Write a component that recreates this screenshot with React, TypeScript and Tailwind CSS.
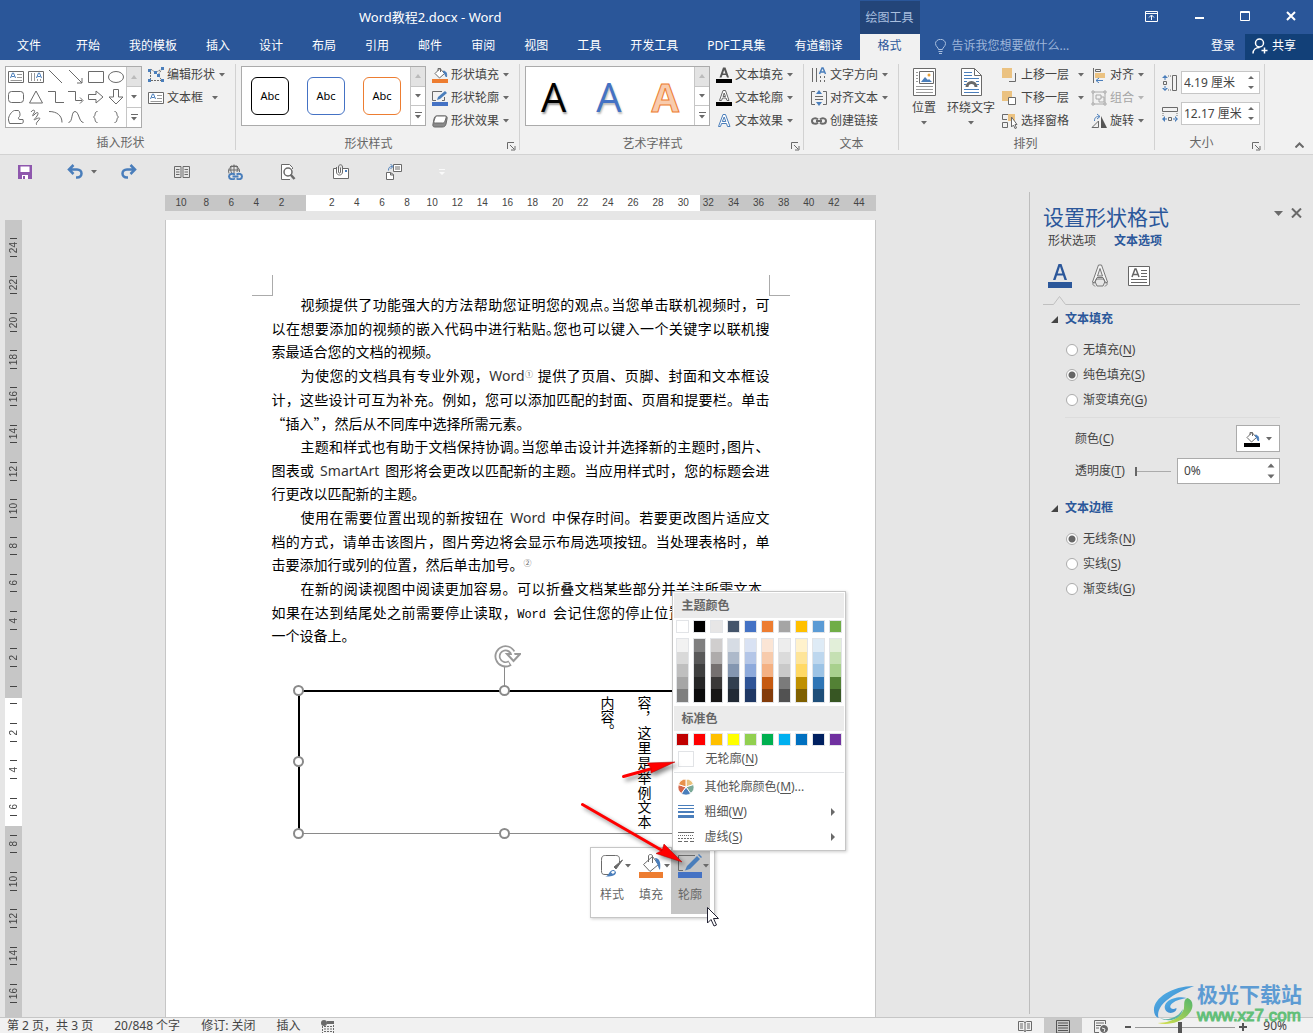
import { ReactNode, useState } from 'react';

const gray = '#6a6a6a';
const blue = '#4a7ebb';

function Ico({ w = 16, h = 16, children }: { w?: number; h?: number; children: ReactNode }) {
    return (
        <svg width={w} height={h} viewBox={`0 0 ${w} ${h}`} fill="none" stroke={gray} strokeWidth="1" className="shrink-0">
            {children}
        </svg>
    );
}

function Caret({ light = false }: { light?: boolean }) {
    return (
        <svg width="6" height="4" viewBox="0 0 6 4" className="shrink-0">
            <path d="M0 0h6L3 3.5z" fill={light ? '#b5b5b5' : '#6a6a6a'} />
        </svg>
    );
}

const Bucket = ({ color }: { color: string }) => (
    <Ico>
        <path d="M3 6.500l5-5 4.500 5-5 4.500zM6 4V1.500h2.500V5" fill="#fff" />
        <path d="M11.500 4c3 .5 3.500 3 3 6-1.500-1-1-3-2.500-4z" fill={blue} stroke={blue} />
        <path d="M0 12h16v4H0z" fill={color} stroke="none" />
    </Ico>
);

const Pen = ({ color }: { color: string }) => (
    <Ico>
        <path d="M10 1.500H.5v9H4M12.500 7v3.500H10" />
        <path d="M5 10l1-3 7-6 2 2-7 6z" fill={blue} stroke="none" />
        <path d="M0 12h16v4H0z" fill={color} stroke="none" />
    </Ico>
);

const LetterA = ({ fill, stroke, bar }: { fill: string; stroke: string; bar?: boolean }) => (
    <Ico>
        <path
            d={bar ? 'M3.500 10.500L7 .5h2.500l3.500 10h-2l-1-2.500H6.500l-1 2.500zM7 6.500h2.500L8.200 3z' : 'M2.500 13.500L7 1.500h2.500l4.500 12h-2.500l-1-3h-5l-1 3zM6.300 8.500h3.500L8.200 4z'}
            fill={fill}
            stroke={stroke}
            fillRule="evenodd"
        />
        {bar && <path d="M0 12h16v4H0z" fill="#000" stroke="none" />}
    </Ico>
);

const TextBoxIcon = () => (
    <Ico>
        <path d="M.5 2.500h15v11H.5z" fill="#fff" />
        <path d="M2.500 9l2-5h1l2 5M3.500 7.500h3" stroke={blue} />
        <path d="M9 5.500h5M9 8.500h5M2.500 11.500H14" stroke="#999" />
    </Ico>
);

const VerticalBoxIcon = () => (
    <Ico>
        <path d="M.5 2.500h15v11H.5z" fill="#fff" />
        <path d="M3.500 4v8M6.500 4v8M9.500 10v2M12.500 10v2" stroke="#999" />
        <path d="M8.500 9l2-5h1l2 5M9.500 7.500h3" stroke={blue} />
    </Ico>
);

const shapes = [
    <path d="M1 1l13 13" />,
    <path d="M1 1l13 13M14 9v5H9" />,
    <path d="M.5 2.500h15v11H.5z" />,
    <ellipse cx="8" cy="8" rx="7.500" ry="5.500" />,
    <rect x=".5" y="2.500" width="15" height="11" rx="3" />,
    <path d="M8 2l6.500 12h-13z" />,
    <path d="M0 2.500h7.500v11H16" />,
    <path d="M0 2.500h7.500v9H14M12 8.500l3 3-3 3" />,
    <path d="M.5 5.500H8V2l7 6-7 6v-3.500H.5z" />,
    <path d="M5.500.5h5V8H15l-7 7-7-7h4.500z" />,
    <path d="M1.500 14.500h12c2 0 2-2 1.500-4H12c-2 0-2-2-.5-3 1-1 .5-5-1-6h-4C4 2 0 7 .5 11z" />,
    <path d="M3 3c2-3 5-2 3 1S4 8 7 5s4-1 2 2-5 5-1 3 5-1 2 2-1 4-1 4" />,
    <path d="M1 2.500c8 0 13 4 13 11" />,
    <path d="M.5 13.500C5 13 3 2.500 7 2.500s4 11 8.500 11" />,
    <path d="M9.500 2.500C6 2.500 8 7 5.500 8c2.500 1 .5 5.500 4 5.500" />,
    <path d="M6.500 2.500C10 2.500 8 7 10.500 8c-2.500 1-.5 5.500-4 5.500" />,
];

function GalleryScroll() {
    return (
        <div className="flex w-[15px] flex-col border-l border-[#c6c6c6]">
            <button aria-label="向上" className="flex flex-1 items-center justify-center bg-[#e3e3e3]">
                <svg width="6" height="4" viewBox="0 0 6 4"><path d="M0 4h6L3 0z" fill="#bbb" /></svg>
            </button>
            <button aria-label="向下" className="flex flex-1 items-center justify-center border-y border-[#c6c6c6] bg-white"><Caret /></button>
            <button aria-label="其他" className="flex flex-1 flex-col items-center justify-center gap-[2px] bg-white">
                <span className="h-px w-[7px] bg-[#6a6a6a]" />
                <Caret />
            </button>
        </div>
    );
}

function Group({ label, launcher, className, children }: { label: string; launcher?: boolean; className: string; children: ReactNode }) {
    return (
        <section className={`relative flex shrink-0 flex-col pt-[3px] after:absolute after:right-0 after:top-[4px] after:h-[86px] after:w-px after:bg-[#d2d2d2] ${className}`}>
            <div className="flex h-[69px]">{children}</div>
            <div className="flex h-[23px] items-center justify-center pt-px text-[#666]">{label}</div>
            {launcher && (
                <button aria-label={`${label} 设置`} className="absolute bottom-[3px] right-[4px]">
                    <svg width="9" height="9" viewBox="0 0 9 9" fill="none" stroke={gray}>
                        <path d="M.5 7V.5H7M3 3l4 4M8 4v4H4" />
                    </svg>
                </button>
            )}
        </section>
    );
}

function Cmd({ icon, text, caret = true, wide, disabled }: { icon: ReactNode; text: string; caret?: boolean; wide?: boolean; disabled?: boolean }) {
    return (
        <button disabled={disabled} className={`flex h-[23px] items-center gap-[3px] whitespace-nowrap ${disabled ? 'text-[#a5a5a5]' : 'text-[#444]'}`}>
            {icon}
            <span>{text}</span>
            {caret && <span className={`flex ${wide ? 'ml-[6px]' : 'ml-px'}`}><Caret light={disabled} /></span>}
        </button>
    );
}

const tabs = ['我的模板', '插入', '设计', '布局', '引用', '邮件', '审阅', '视图', '工具', '开发工具', 'PDF工具集', '有道翻译'];

function Header() {
    return (
        <header className="flex h-[60px] shrink-0 bg-[#2a5699] text-white">
            <div className="flex flex-col">
                <h1 className="flex h-[34px] items-center justify-center text-[13px]">Word教程2.docx - Word</h1>
                <nav className="flex h-[24px] items-center gap-[29px] whitespace-nowrap pl-[17px] pr-[18px]">
                    <button>文件</button>
                    <button className="ml-[6px]">开始</button>
                    {tabs.map((t) => <button key={t}>{t}</button>)}
                </nav>
            </div>
            <div className="flex w-[60px] shrink-0 flex-col pt-px">
                <div className="flex h-[33px] items-center justify-center bg-[#234579] pr-[2px] text-[#a9bfdf]">绘图工具</div>
                <button className="flex h-[26px] items-center justify-center bg-[#f1f1f1] pb-[2px] pr-[2px] text-[#2b579a]">格式</button>
            </div>
            <div className="flex flex-1 flex-col">
                <div className="flex h-[32px] items-center justify-end gap-[36px] pr-[17px]">
                    <button aria-label="功能区显示选项">
                        <svg width="13" height="11" viewBox="0 0 13 11" fill="none" stroke="#fff"><path d="M.5.5h12v10H.5zM0 2.500h13M6.500 9V4.500M4 6.500L6.500 4 9 6.500" /></svg>
                    </button>
                    <button aria-label="最小化"><svg width="10" height="10" viewBox="0 0 10 10"><path d="M1 6h9v2H1z" fill="#fff" /></svg></button>
                    <button aria-label="最大化"><svg width="10" height="10" viewBox="0 0 10 10"><path d="M.5.5h9v9h-9zM0 1.500h10" fill="none" stroke="#fff" /></svg></button>
                    <button aria-label="关闭"><svg width="10" height="10" viewBox="0 0 10 10"><path d="M1 1l8 8M9 1L1 9" stroke="#fff" strokeWidth="2" /></svg></button>
                </div>
                <div className="flex h-[28px] items-center">
                    <label className="flex min-w-0 flex-1 items-center gap-[5px] pl-[15px]">
                        <svg width="11" height="15" viewBox="0 0 11 15" fill="none" stroke="#a9bfdf"><path d="M3.500 10.500c0-2-3-3-3-6a4.800 4 0 0 1 10 0c0 3-3 4-3 6zM3.500 12.500h4M4 14.500h3" /></svg>
                        <input aria-label="操作说明搜索" placeholder="告诉我您想要做什么..." className="min-w-0 flex-1 bg-transparent outline-none placeholder:text-[#9db5d9]" />
                    </label>
                    <button className="mr-[10px] pb-px">登录</button>
                    <button className="mt-[2px] flex h-[26px] w-[68px] items-center gap-[4px] bg-[#124078] pb-[3px] pl-[7px]">
                        <svg width="16" height="16" viewBox="0 0 16 16" fill="none" stroke="#fff" strokeWidth="1.500"><circle cx="7.500" cy="5" r="4" /><path d="M1 15.500c0-4 3-6 6.500-6M9.500 12.500h6M12.500 9.500v6" /></svg>
                        共享
                    </button>
                </div>
            </div>
        </header>
    );
}

function SizeField({ label, value, icon }: { label: string; value: string; icon: ReactNode }) {
    const [size, setSize] = useState(value);
    return (
        <label className="flex items-center gap-[3px]">
            {icon}
            <span className="flex h-[23px] w-[79px] items-center border border-[#c6c6c6] bg-white pl-[2px] pr-[4px]">
                <input aria-label={label} value={size} onChange={(e) => setSize(e.target.value)} className="w-0 min-w-0 flex-1 text-[#444] outline-none" />
                <Spin />
            </span>
        </label>
    );
}

const Spin = ({ big = false }: { big?: boolean }) => (
    <svg width="8" height={big ? 16 : 13} viewBox={big ? '0 0 8 16' : '0 0 8 13'} fill={gray} className="shrink-0">
        <path d={big ? 'M.5 4.500h7L4 .5zM.5 11.500h7L4 15.500z' : 'M1 3h6L4 0zM1 10h6l-3 3z'} />
    </svg>
);

function Ribbon() {
    return (
        <div className="flex h-[95px] shrink-0 border-b border-[#d2d2d2] bg-[#f1f1f1]">
            <Group label="插入形状" className="w-[236px] pl-[5px]">
                <div className="mt-[3px] flex h-[62px] border border-[#ababab] bg-white">
                    <div className="grid w-[120px] grid-cols-6 place-items-center">
                        <TextBoxIcon />
                        <VerticalBoxIcon />
                        {shapes.map((s, i) => <Ico key={i}>{s}</Ico>)}
                    </div>
                    <GalleryScroll />
                </div>
                <div className="ml-[6px]">
                    <Cmd
                        text="编辑形状"
                        icon={
                            <Ico>
                                <path d="M2.500 4.500V2l5 3.500L14 2 10 8l4 5.500H2.500z" strokeDasharray="2 1" />
                                <path d="M0 2h3v3H0zM13 0h3v3h-3zM6 4h3v3H6zM9 7h3v3H9zM0 12h3v3H0zM13 12h3v3h-3z" fill={blue} stroke="none" />
                            </Ico>
                        }
                    />
                    <Cmd text="文本框" icon={<TextBoxIcon />} wide />
                </div>
            </Group>

            <Group label="形状样式" launcher className="w-[284px] pl-[5px] [&>div:nth-child(2)]:pr-[24px]">
                <div className="mt-[3px] flex h-[60px] w-[185px] border border-[#ababab] bg-white">
                    <div className="flex flex-1 items-center gap-[18px] pl-[9px]">
                        <button className="h-[38px] w-[38px] rounded-[6px] border border-black text-[11px] text-black">Abc</button>
                        <button className="h-[38px] w-[38px] rounded-[6px] border border-[#4472c4] text-[11px] text-black">Abc</button>
                        <button className="h-[38px] w-[38px] rounded-[6px] border border-[#ed7d31] text-[11px] text-black">Abc</button>
                    </div>
                    <GalleryScroll />
                </div>
                <div className="ml-[6px]">
                    <Cmd text="形状填充" icon={<Bucket color="#ed7d31" />} />
                    <Cmd text="形状轮廓" icon={<Pen color="#4472c4" />} />
                    <Cmd
                        text="形状效果"
                        icon={
                            <Ico>
                                <path d="M5 3h8c2 0 2.500 1 2 3l-1 5c-.5 2-1.500 3-4 3H3c-2 0-2.500-1-2-3l1-5c.5-2 1-3 3-3z" fill="#8a8a8a" />
                                <path d="M5.500 3h7c1.500 0 2 .5 1.500 2l-1 3c-.5 1.500-1 2-2.500 2H3.500C2 10 1.500 9.500 2 8l1-3c.5-1.500 1-2 2.500-2z" fill="#fff" />
                            </Ico>
                        }
                    />
                </div>
            </Group>

            <Group label="艺术字样式" launcher className="w-[284px] pl-[5px] [&>div:nth-child(2)]:pr-[24px]">
                <div className="mt-[3px] flex h-[60px] w-[185px] border border-[#ababab] bg-white">
                    <div className="flex flex-1 items-center justify-around pt-[2px] font-['Open_Sans',sans-serif] text-[40px] leading-none">
                        <button className="font-medium text-black [text-shadow:1px_2px_2px_#999]">A</button>
                        <button className="font-medium text-[#4472c4] [text-shadow:1px_2px_2px_#bbb]">A</button>
                        <button className="font-bold text-[#f8cbad] [-webkit-text-stroke:1px_#ed7d31]">A</button>
                    </div>
                    <GalleryScroll />
                </div>
                <div className="ml-[6px]">
                    <Cmd text="文本填充" icon={<LetterA fill="#555" stroke="none" bar />} />
                    <Cmd text="文本轮廓" icon={<LetterA fill="#fff" stroke="#666" bar />} />
                    <Cmd text="文本效果" icon={<LetterA fill="#fff" stroke={blue} />} />
                </div>
            </Group>

            <Group label="文本" className="w-[95px] pl-[7px] [&>div:nth-child(2)]:pr-[7px]">
                <div>
                    <Cmd
                        text="文字方向"
                        icon={
                            <Ico>
                                <path d="M1.500 1v14M5.500 1v14M9.500 9v2M9.500 13v2M13.500 9v2M13.500 13v2" />
                                <path d="M8.500 7L11 1h1l2.500 6M9.500 5h4" stroke={blue} strokeWidth="1.500" />
                            </Ico>
                        }
                    />
                    <Cmd
                        text="对齐文本"
                        icon={
                            <Ico>
                                <path d="M4 1.500H.5v13H4M12 1.500h3.500v13H12M4 6.500h8M4 9.500h8" />
                                <path d="M8 0l3 4H5zM8 16l3-4H5z" fill={blue} stroke="none" />
                            </Ico>
                        }
                    />
                    <Cmd text="创建链接" caret={false} icon={<Ico><path d="M7 6.500C5 4.500 1 5 1 8s4 3.500 6 1.500M9 6.500C11 4.500 15 5 15 8s-4 3.500-6 1.500M5 8h6" strokeWidth="2" /></Ico>} />
                </div>
            </Group>

            <Group label="排列" className="w-[256px] pl-[9px] [&>div:nth-child(2)]:pr-[12px]">
                <button className="flex w-[32px] flex-col items-center pt-[5px] text-[#444]">
                    <svg width="23" height="28" viewBox="0 0 23 28" fill="none" stroke={gray}>
                        <path d="M.5.5h22v27H.5z" fill="#fff" />
                        <path d="M6.500 3.500h14v12h-14z" />
                        <path d="M8 14l4-5 3 3 1-1 3 3z" fill={blue} stroke="none" />
                        <circle cx="16" cy="7" r="1.500" fill="#e9a23b" stroke="none" />
                        <path d="M3 4.500h2M3 7.500h2M3 10.500h2M3 13.500h2M3 18.500h17M3 21.500h17M3 24.500h17" stroke="#999" />
                    </svg>
                    <span className="mt-[2px] leading-[20px]">位置</span>
                    <span className="mt-[3px]"><Caret /></span>
                </button>
                <button className="ml-[7px] flex flex-col items-center pt-[5px] text-[#444]">
                    <svg width="21" height="28" viewBox="0 0 21 28" fill="none" stroke={gray}>
                        <path d="M.5.5h13l7 7v20H.5z" fill="#fff" />
                        <path d="M13.500.5v7h7" />
                        <path d="M3 4.500h8M3 7.500h8M3 10.500h15M3 13.500h3M15 13.500h3M3 16.500h2M16 16.500h2M3 21.500h15M3 24.500h15" stroke={blue} />
                        <path d="M6 19a4.500 4.500 0 0 1 9 0" strokeWidth="3" />
                    </svg>
                    <span className="mt-[2px] leading-[20px]">环绕文字</span>
                    <span className="mt-[3px]"><Caret /></span>
                </button>
                <div className="ml-[7px]">
                    <Cmd text="上移一层" wide icon={<Ico><path d="M7 14.500h6.500V6" fill="none" /><path d="M0 1h10v10H0z" fill="#ebc281" stroke="none" /></Ico>} />
                    <Cmd text="下移一层" wide icon={<Ico><path d="M0 1h10v10H0z" fill="#ebc281" stroke="none" /><path d="M6.500 7.500h7v7h-7z" fill="#fff" /></Ico>} />
                    <Cmd
                        text="选择窗格"
                        caret={false}
                        icon={
                            <Ico>
                                <path d="M6 1h7v7H6z" fill="#ebc281" stroke="none" />
                                <path d="M6 1.500H.5v5H5M.5 9.500h5v5h-5z" />
                                <path d="M9.500 4v10l2-2 1.500 3.500 1.500-.5-1.500-3.500H15z" fill="#fff" />
                            </Ico>
                        }
                    />
                </div>
                <div className="ml-[7px]">
                    <Cmd text="对齐" icon={<Ico><path d="M2.500 1v15M4.500 2.500h5v2h-5z" /><path d="M4 6h10v5H4z" fill="#ebc281" stroke="none" /><path d="M12 13.500H5M8 11l-3 2.500L8 16" stroke={blue} /></Ico>} />
                    <Cmd text="组合" disabled icon={<Ico><path d="M1 1h2v2H1zM13 1h2v2h-2zM1 13h2v2H1zM13 13h2v2h-2zM3 2h10M3 14h10M2 3v10M14 3v10M5 5h5v4H5zM8 9v3h5V7h-3" stroke="#aaa" /></Ico>} />
                    <Cmd text="旋转" icon={<Ico><path d="M1 14.500h6.500V8z" /><path d="M10 3v12h6z" fill="#555" stroke="none" /><path d="M3.500 8c0-4 2-4.500 5-4.500M6 1l3 2.500L6 6" stroke={blue} /></Ico>} />
                </div>
            </Group>

            <Group label="大小" launcher className="w-[110px] pl-[7px] [&>div:nth-child(2)]:pr-[24px]">
                <div className="flex flex-col gap-[8px] pt-[8px]">
                    <SizeField
                        label="高度"
                        value="4.19 厘米"
                        icon={<Ico><path d="M10.500.5h4v15h-4zM1.500 6.500h3v3h-3z" /><path d="M6 1h3M6 15h3" strokeDasharray="1 1" /><path d="M3 0l3 3H0zM3 16l3-3H0zM2.500 2h1v3h-1zM2.500 11h1v3h-1z" fill={blue} stroke="none" /></Ico>}
                    />
                    <SizeField
                        label="宽度"
                        value="12.17 厘米"
                        icon={<Ico><path d="M.5 1.500h15v4H.5zM6.500 11.500h3v3h-3z" /><path d="M1 7v3M15 7v3" strokeDasharray="1 1" /><path d="M0 13l3-3v6zM16 13l-3-3v6zM2 12.500h3v1H2zM11 12.500h3v1h-3z" fill={blue} stroke="none" /></Ico>}
                    />
                </div>
            </Group>
            <button aria-label="折叠功能区" className="ml-auto mr-[9px] self-end pb-[6px]">
                <svg width="9" height="6" viewBox="0 0 9 6" fill="none" stroke={gray} strokeWidth="2"><path d="M.5 5.500l4-4 4 4" /></svg>
            </button>
        </div>
    );
}

function QuickAccess() {
    return (
        <div className="flex h-[34px] shrink-0 items-center gap-[37px] pl-[17px]">
            <button aria-label="保存">
                <Ico><path d="M1 1h14v14H1z" fill="#8e57ad" stroke="none" /><path d="M3.500 2.500h9V8h-9zM5 11h6v4H5z" fill="#fff" stroke="none" /><path d="M6 12h2v3H6z" fill="#8e57ad" stroke="none" /></Ico>
            </button>
            <div className="-ml-[3px] flex items-center gap-[8px]">
                <button aria-label="撤消"><Ico><path d="M2 5.500h8c6 0 6 8 0 8H9M6.500 1L2 5.500 6.500 10" stroke={blue} strokeWidth="2.500" /></Ico></button>
                <button aria-label="撤消列表"><Caret /></button>
                <button aria-label="恢复" className="ml-[16px]"><Ico><path d="M14 5.500H6c-6 0-6 8 0 8h1M9.500 1L14 5.500 9.500 10" stroke={blue} strokeWidth="2.500" /></Ico></button>
            </div>
            <button aria-label="并排查看"><Ico><path d="M.5 2.500h6.500v11H.5zM9 2.500h6.500v11H9zM2 5.500h3.500M2 8h3.500M2 10.500h3.500M10.500 5.500H14M10.500 8H14M10.500 10.500H14" /></Ico></button>
            <button aria-label="超链接">
                <Ico><path d="M2 9.500A5.500 5.500 0 1 1 12.500 8M1.500 6h11M7 .5V9M3 2.500h8M4.500 1.500c-1 3-1 5 0 7.500M9.500 1.500c1 2.500 1 4.500.5 6.500" /><path d="M8 10.500c-2.500-1.500-6-.5-6 2s3.500 3.500 6 2M9.500 10.500c2.500-1.500 5.500-.5 5.500 2s-3 3.500-5.500 2M5.500 12.500h6" stroke={blue} strokeWidth="2" /></Ico>
            </button>
            <button aria-label="打印预览"><Ico><path d="M10 15.500H1.500V.5h8l3 3V5" fill="#fff" /><circle cx="8" cy="8" r="4" fill="#fff" strokeWidth="1.500" /><path d="M10.500 10.500l4 4.500" strokeWidth="2.500" /></Ico></button>
            <button aria-label="附件"><Ico><path d="M3.500 4.500h-3v10h15v-10H10" fill="#fff" /><path d="M12 6h2v2h-2z" fill={blue} stroke="none" /><path d="M3.500 3v5c0 4 6 4 6 0V3c0-3-4-3-4 0v5c0 1.500 2 1.500 2 0V3.500" /></Ico></button>
            <button aria-label="插入对象"><Ico><path d="M7.500.5h8v7h-8zM9 3h5M9 5h5M.5 8.500h4l3 2v5h-7zM4.500 8.500V11h3" fill="#fff" /><path d="M2.500 6.500c0-3 1-4 4-4M4.500 0L7 2.500 4.500 5" stroke={blue} /></Ico></button>
            <button aria-label="自定义快速访问工具栏"><svg width="6" height="6" viewBox="0 0 6 6" fill="#fafafa"><path d="M0 0h6v1H0zM0 3h6L3 6z" /></svg></button>
        </div>
    );
}

const hTicks = [10, 8, 6, 4, 2, 0, 2, 4, 6, 8, 10, 12, 14, 16, 18, 20, 22, 24, 26, 28, 30, 32, 34, 36, 38, 40, 42, 44];
const vTicks = [24, 22, 20, 18, 16, 14, 12, 10, 8, 6, 4, 2, 0, 2, 4, 6, 8, 10, 12, 14, 16];

const Half = ({ children }: { children: string }) => <span className="[font-feature-settings:'halt']">{children}</span>;
const En = ({ children }: { children: string }) => <span className="px-[2px] text-[#333]">{children}</span>;
const Note = ({ children }: { children: string }) => <sup className="text-[8px] leading-none text-[#666]">{children}</sup>;

// one entry per printed line, three lines to a paragraph
const paragraphs: ReactNode[][] = [
    [
        <>视频提供了功能强大的方法帮助您证明您的观点<Half>。</Half>当您单击联机视频时，可</>,
        <>以在想要添加的视频的嵌入代码中进行粘贴<Half>。</Half>您也可以键入一个关键字以联机搜</>,
        '索最适合您的文档的视频。',
    ],
    [
        <>为使您的文档具有专业外观，<span className="text-[#333]">Word</span><Note>①</Note> 提供了页眉、页脚、封面和文本框设</>,
        '计，这些设计可互为补充。例如，您可以添加匹配的封面、页眉和提要栏。单击',
        <><span className="font-['Noto_Sans_CJK_SC']">“</span>插入<span className="font-['Noto_Sans_CJK_SC']">”</span>，然后从不同库中选择所需元素。</>,
    ],
    [
        <>主题和样式也有助于文档保持协调<Half>。</Half>当您单击设计并选择新的主题时<Half>，</Half>图片、</>,
        <>图表或 <En>SmartArt</En> 图形将会更改以匹配新的主题。当应用样式时，您的标题会进</>,
        '行更改以匹配新的主题。',
    ],
    [
        <>使用在需要位置出现的新按钮在 <En>Word</En> 中保存时间。若要更改图片适应文</>,
        '档的方式，请单击该图片，图片旁边将会显示布局选项按钮。当处理表格时，单',
        <>击要添加行或列的位置，然后单击加号。<Note>②</Note></>,
    ],
    [
        <>在新的阅读视图中阅读更加容易。可以折叠文档某些部分并关注所需文本<Half>。</Half></>,
        <>如果在达到结尾处之前需要停止读取，<span className="mr-[3px] font-['Liberation_Mono'] text-[12px]">Word</span> 会记住您的停止位置<span className="px-[12px]">-</span>即使在另</>,
        '一个设备上。',
    ],
];

const themeColors = [
    ['#ffffff', '#f2f2f2', '#d9d9d9', '#bfbfbf', '#a6a6a6', '#7f7f7f'],
    ['#000000', '#7f7f7f', '#595959', '#3f3f3f', '#262626', '#0c0c0c'],
    ['#e7e6e6', '#d0cece', '#aeabab', '#757070', '#3a3838', '#171616'],
    ['#44546a', '#d6dce4', '#adb9ca', '#8496b0', '#323f4f', '#222a35'],
    ['#4472c4', '#d9e2f3', '#b4c6e7', '#8eaadb', '#2f5496', '#1f3864'],
    ['#ed7d31', '#fbe5d5', '#f7cbac', '#f4b183', '#c55a11', '#833c0b'],
    ['#a5a5a5', '#ededed', '#dbdbdb', '#c9c9c9', '#7b7b7b', '#525252'],
    ['#ffc000', '#fff2cc', '#fee599', '#ffd965', '#bf9000', '#7f6000'],
    ['#5b9bd5', '#deebf6', '#bdd7ee', '#9cc3e5', '#2e75b5', '#1e4e79'],
    ['#70ad47', '#e2efd9', '#c5e0b3', '#a8d08d', '#538135', '#375623'],
];
const standardColors = ['#c00000', '#ff0000', '#ffc000', '#ffff00', '#92d050', '#00b050', '#00b0f0', '#0070c0', '#002060', '#7030a0'];

function Swatch({ color }: { color: string }) {
    return <button aria-label={color} className="block h-[13px] w-[13px] border border-[#e2e4e7]" style={{ backgroundColor: color }} />;
}

const Key = ({ text, k, after = ')' }: { text: string; k: string; after?: string }) => (
    <span className="whitespace-nowrap">{text}(<u className="underline-offset-2">{k}</u>{after}</span>
);

const Arrow = () => <svg width="4" height="8" viewBox="0 0 4 8" fill={gray}><path d="M0 0l4 4-4 4z" /></svg>;

function OutlineMenu() {
    return (
        <div className="absolute left-[506px] top-[371px] w-[174px] border border-[#c6c6c6] bg-white p-px text-[#555] shadow-[1px_1px_3px_#0003]">
            <h2 className="h-[25px] bg-[#ebebeb] pl-[8px] font-bold leading-[25px] text-[#666]">主题颜色</h2>
            <div className="flex justify-between px-[2px] pt-[2px]">
                {themeColors.map((col) => (
                    <div key={col[0]}>
                        <Swatch color={col[0]} />
                        <div className="mt-[5px] grid h-[65px] grid-rows-5 border border-[#e2e4e7]">
                            {col.slice(1).map((c) => (
                                <button key={c} aria-label={c} className="block w-[11px]" style={{ backgroundColor: c }} />
                            ))}
                        </div>
                    </div>
                ))}
            </div>
            <h2 className="mt-[3px] h-[25px] bg-[#ebebeb] pl-[8px] font-bold leading-[25px] text-[#666]">标准色</h2>
            <div className="flex justify-between px-[2px] pt-[2px]">
                {standardColors.map((c) => <Swatch key={c} color={c} />)}
            </div>
            <button className="flex h-[27px] w-full items-center gap-[12px] border-b border-[#e1e3e6] pl-[4px]">
                <span className="h-[16px] w-[16px] border border-[#e1e3e6]" />
                <Key text="无轮廓" k="N" />
            </button>
            <button className="mt-px flex h-[25px] w-full items-center gap-[11px] pl-[4px]">
                <svg width="16" height="16" viewBox="-8 -8 16 16" stroke="#fff">
                    <path d="M0 0V-8A8 8 0 0 1 7.600-2.500z" fill="#e9c17c" />
                    <path d="M0 0L7.600-2.500A8 8 0 0 1 4.700 6.500z" fill="#7aa998" />
                    <path d="M0 0L4.700 6.500A8 8 0 0 1-4.700 6.500z" fill="#4a7ebb" />
                    <path d="M0 0L-4.700 6.500A8 8 0 0 1-7.600-2.500z" fill="#d4664a" />
                    <path d="M0 0L-7.600-2.500A8 8 0 0 1 0-8z" fill="#e8924a" />
                </svg>
                <Key text="其他轮廓颜色" k="M" after=")..." />
            </button>
            <button className="flex h-[25px] w-full items-center gap-[11px] pl-[4px] pr-[9px]">
                <svg width="16" height="14" viewBox="0 0 16 14" fill="#4a7ebb"><path d="M0 0h16v1H0zM0 3h16v1H0zM0 6h16v2H0zM0 10h16v3H0z" /></svg>
                <Key text="粗细" k="W" />
                <span className="ml-auto"><Arrow /></span>
            </button>
            <button className="flex h-[25px] w-full items-center gap-[11px] pl-[4px] pr-[9px]">
                <svg width="16" height="12" viewBox="0 0 16 12" stroke={gray}><path d="M0 1.500h16" /><path d="M0 4.500h16" strokeDasharray="1 1" /><path d="M0 7.500h16" strokeDasharray="2 1" /><path d="M0 10.500h16" strokeDasharray="4 2" /></svg>
                <Key text="虚线" k="S" />
                <span className="ml-auto"><Arrow /></span>
            </button>
        </div>
    );
}

function MiniToolbar() {
    return (
        <div className="absolute left-[424px] top-[627px] flex h-[71px] w-[125px] border border-[#c6c6c6] bg-white pb-[3px] pl-[2px] text-[#666] shadow-[1px_1px_3px_#0003]">
            <button className="flex w-[39px] shrink-0 flex-col items-center pt-[6px]">
                <span className="flex items-center gap-px pl-[6px]">
                    <svg width="24" height="24" viewBox="0 0 24 24" fill="none" stroke={gray}>
                        <path d="M9 20.500H5c-3 0-3.500-1-3.500-4v-10c0-4 1-5 4-5h10c4 0 4 2 4 5V8" fill="#fff" />
                        <path d="M22.500 6L16 15l-2-2z" fill={gray} />
                        <path d="M5 22.500c4 0 4-7 9-6.500l2 2c0 4-6 5-11 4.500z" fill={blue} stroke="none" />
                        <path d="M11 18.500c1-2 3-2 4-.5l-2 2z" fill="#fff" stroke="none" />
                    </svg>
                    <Caret />
                </span>
                <span className="mt-[9px]">样式</span>
            </button>
            <button className="flex w-[39px] shrink-0 flex-col items-center pt-[6px]">
                <span className="flex items-center gap-px pl-[6px]">
                    <svg width="24" height="24" viewBox="0 0 24 24" fill="none" stroke={gray}>
                        <path d="M4.500 10.500l9-8 6 8-8.500 7z" fill="#fff" />
                        <path d="M9.500 8V2c0-2 4-2 4 0v7" />
                        <path d="M16 4c5 0 6 5 5 12-2-2-2-6-4-8z" fill={blue} stroke="none" />
                        <path d="M0 18h24v6H0z" fill="#ed7d31" stroke="none" />
                    </svg>
                    <Caret />
                </span>
                <span className="mt-[9px]">填充</span>
            </button>
            <button className="flex w-[39px] shrink-0 flex-col items-center bg-[#c5c5c5] pt-[6px]">
                <span className="flex items-center gap-px pl-[6px]">
                    <svg width="24" height="24" viewBox="0 0 24 24" fill="none" stroke={gray}>
                        <path d="M17 1.500H.5v15H5" />
                        <path d="M7 16.500l2-4.500L19 2l3 3-10 10zM20 1l1-1 3 3-1 1z" fill={blue} stroke="none" />
                        <path d="M0 18h24v6H0z" fill="#4472c4" stroke="none" />
                    </svg>
                    <Caret />
                </span>
                <span className="mt-[9px]">轮廓</span>
            </button>
        </div>
    );
}

const handles = ['left-[127px] top-[465px]', 'left-[333px] top-[465px]', 'left-[127px] top-[536px]', 'left-[127px] top-[608px]', 'left-[333px] top-[608px]'];

function Page() {
    return (
        <article className="relative min-h-0 w-[711px] flex-1 border-x border-[#c6c6c6] bg-white pl-[106px] pr-[105px] pt-[73px] font-['Noto_Sans','Noto_Sans_CJK_SC',sans-serif] text-[14px] leading-[24px] text-black">
            <span className="absolute left-[86px] top-[55px] h-[21px] w-[21px] border-b border-r border-[#ababab]" />
            <span className="absolute right-[85px] top-[55px] h-[21px] w-[21px] border-b border-l border-[#ababab]" />
            {paragraphs.map((lines, i) => (
                <p key={i} className="grid h-[71px] grid-rows-3">
                    {lines.map((line, j) => (
                        <span key={j} className={`block h-[24px] whitespace-nowrap ${j === 0 ? 'pl-[29px]' : ''} ${j === 2 ? '' : 'text-justify [text-align-last:justify]'}`}>
                            {line}
                        </span>
                    ))}
                </p>
            ))}

            <div className="absolute left-[132px] top-[470px] h-[144px] w-[413px] border-b border-l-2 border-t-2 border-b-[#8a8a8a] border-l-black border-t-black">
                <div className="absolute left-[289px] top-[4px] h-[133px] text-[14px] leading-[37px] [writing-mode:vertical-rl]">
                    <div className="[text-align-last:justify]">容，这里是举例文本</div>
                    <div>内容。</div>
                </div>
            </div>
            <span className="absolute left-[338px] top-[446px] h-[20px] w-px bg-[#8a8a8a]" />
            {handles.map((pos) => (
                <span key={pos} className={`absolute h-[11px] w-[11px] rounded-full border-2 border-[#8a8a8a] bg-white ${pos}`} />
            ))}
            <svg width="28" height="24" viewBox="0 0 28 24" className="absolute left-[327px] top-[424px]" fill="none">
                <path d="M19.500 8.500A8 8 0 1 0 17 19" stroke="#999" strokeWidth="6" />
                <path d="M14 10h13l-6.500 7z" fill="#fff" stroke="#999" strokeWidth="2" />
                <path d="M20.500 11A8 8 0 1 0 16 19.500" stroke="#fff" strokeWidth="2.500" />
            </svg>

            <div className="text-[12px] leading-[16px]">
                <MiniToolbar />
                <OutlineMenu />
            </div>

            <svg width="110" height="120" viewBox="0 0 110 120" className="absolute left-[409px] top-[532px] drop-shadow-[3px_3px_2px_#0007]" fill="#f00">
                <path d="M48.500 24.500L79 16" stroke="#f00" strokeWidth="3" strokeLinecap="round" />
                <path d="M100 10L72 11l4 5 0 5z" stroke="#a00" strokeWidth=".5" />
                <path d="M7.500 52.500L88 99" stroke="#f00" strokeWidth="3" strokeLinecap="round" />
                <path d="M107 110L81 101.500l6-3 2-6.500z" stroke="#a00" strokeWidth=".5" />
            </svg>
            <svg width="13" height="20" viewBox="0 0 13 20" className="absolute left-[541px] top-[687px]">
                <path d="M.5.500v15.500l3.500-3.500 3 6.500 2.500-1-3-6.500h5z" fill="#fff" stroke="#223" />
            </svg>
        </article>
    );
}

function Editor() {
    return (
        <div className="flex min-w-0 flex-1">
            <div className="flex w-[22px] shrink-0 pl-[5px] pt-[31px]">
                <div className="flex flex-1 flex-col items-center bg-[linear-gradient(#c6c6c6_478px,#fff_478px,#fff_606px,#c6c6c6_606px)] pb-[5px] pt-[9px] font-['Liberation_Sans',sans-serif] text-[10px] leading-[10px] text-[#444]">
                    {vTicks.map((n, i) => (
                        <div key={i} className="flex flex-1 items-center">
                            <span className="flex h-1/2 w-[7px] items-center justify-center border-y border-[#444]">
                                {n > 0 && <span className="rotate-180 [writing-mode:vertical-rl]">{n}</span>}
                            </span>
                        </div>
                    ))}
                </div>
            </div>
            <div className="flex min-w-0 flex-1 flex-col items-center pr-[11px] pt-[6px]">
                <div className="mb-[9px] flex h-[16px] w-[711px] shrink-0 items-center bg-[linear-gradient(to_right,#c6c6c6_141px,#fff_141px,#fff_535px,#c6c6c6_535px)] px-[4px] font-['Liberation_Sans',sans-serif] text-[10px] text-[#444]">
                    {hTicks.map((n, i) => <span key={i} className="flex-1 text-center">{n > 0 && n}</span>)}
                </div>
                <Page />
            </div>
        </div>
    );
}

function Radio({ name, text, k, checked }: { name: string; text: string; k: string; checked?: boolean }) {
    return (
        <label className="flex h-[25px] items-center gap-[5px] pl-[23px]">
            <input
                type="radio"
                name={name}
                defaultChecked={checked}
                className="h-[12px] w-[12px] appearance-none rounded-full border border-[#ababab] bg-white checked:bg-[radial-gradient(circle,#666_3px,#fff_4px)]"
            />
            <Key text={text} k={k} />
        </label>
    );
}

function SectionTitle({ children }: { children: string }) {
    return (
        <h3 className="flex h-[26px] items-center gap-[7px] pl-[8px] font-bold text-[#2b579a]">
            <svg width="7" height="7" viewBox="0 0 7 7" fill="#444"><path d="M7 0v7H0z" /></svg>
            {children}
        </h3>
    );
}

function FormatPane() {
    return (
        <aside className="mb-[3px] mt-[3px] flex w-[284px] shrink-0 flex-col border-l border-[#bdbdbd] pl-[13px] pr-[13px] text-[#444]">
            <div className="flex h-[49px] items-center justify-between">
                <h2 className="text-[21px] leading-[28px] text-[#2b579a]">设置形状格式</h2>
                <div className="-mr-[2px] flex items-center gap-[8px] pb-[7px]">
                    <button aria-label="任务窗格选项"><svg width="9" height="5" viewBox="0 0 9 5" fill={gray}><path d="M0 0h9L4.500 5z" /></svg></button>
                    <button aria-label="关闭窗格"><svg width="11" height="10" viewBox="0 0 11 10" stroke={gray} strokeWidth="2"><path d="M1 .5l9 9M10 .5l-9 9" /></svg></button>
                </div>
            </div>
            <div className="-mt-[9px] flex h-[18px] items-center gap-[18px] pl-[5px]">
                <button>形状选项</button>
                <button className="font-bold text-[#2b579a]">文本选项</button>
            </div>
            <div className="mt-[14px] flex items-center gap-[20px] pl-[5px]">
                <button aria-label="文本填充与轮廓">
                    <svg width="24" height="24" viewBox="0 0 24 24" fill="#2b579a"><path fillRule="evenodd" d="M5 16L10.500 0h3L19 16h-2.500l-1.500-4.500H9L7.500 16zM9.700 9.500h4.600L12 2.500z" /><path d="M0 18h24v6H0z" /></svg>
                </button>
                <button aria-label="文本效果">
                    <svg width="16" height="24" viewBox="0 0 16 24" fill="#f4f4f4" stroke="#777">
                        <path fillRule="evenodd" d="M.5 18L6.500 1h3l6 17-2 1-2-4h-7l-2 4zM5.500 12h5L8 4.500z" />
                        <path d="M5 13.500h6l2 4-2 4.500H5l-2-4.500zM1 18v2.500l2 2M15 18v2.500l-2 2" fill="none" />
                    </svg>
                </button>
                <button aria-label="布局属性">
                    <svg width="22" height="20" viewBox="0 0 22 20" fill="none" stroke="#666"><path d="M.5.5h21v19H.5z" fill="#fff" /><path d="M13 4.500h6M13 7.500h6M13 10.500h6M3 13.500h16M3 16.500h16" /><path d="M4 11l3-8h1l3 8M5 8.500h5" strokeWidth="1.500" /></svg>
                </button>
            </div>
            <svg width="257" height="9" viewBox="0 0 257 9" fill="none" stroke="#c0c0c0" className="mt-[8px]"><path d="M0 8.500h10.500l6-8 6 8H257" /></svg>
            <div className="pt-px">
                <SectionTitle>文本填充</SectionTitle>
                <div className="pt-[5px]">
                    <Radio name="fill" text="无填充" k="N" />
                    <Radio name="fill" text="纯色填充" k="S" checked />
                    <Radio name="fill" text="渐变填充" k="G" />
                </div>
                <div className="ml-[22px] mr-[20px] mt-[5px] border-t border-[#dcdcdc] pl-[10px] pt-[7px]">
                    <div className="flex h-[27px] items-center justify-between">
                        <Key text="颜色" k="C" />
                        <button aria-label="颜色" className="flex h-[27px] w-[44px] items-center justify-center gap-[6px] border border-[#ababab] bg-white">
                            <Bucket color="#000" />
                            <Caret />
                        </button>
                    </div>
                    <div className="mt-[6px] flex h-[26px] items-center">
                        <label htmlFor="alpha"><Key text="透明度" k="T" /></label>
                        <input
                            type="range"
                            aria-label="透明度滑块"
                            defaultValue={0}
                            className="ml-[10px] mr-[6px] h-[10px] w-0 min-w-0 flex-1 appearance-none bg-[linear-gradient(#ababab,#ababab)] bg-[length:100%_1px] bg-center bg-no-repeat [&::-webkit-slider-thumb]:h-[9px] [&::-webkit-slider-thumb]:w-[2px] [&::-webkit-slider-thumb]:appearance-none [&::-webkit-slider-thumb]:bg-[#666]"
                        />
                        <span className="flex h-[26px] w-[103px] items-center border border-[#ababab] bg-white pl-[6px] pr-[4px]">
                            <input id="alpha" defaultValue="0%" className="w-0 min-w-0 flex-1 pb-px outline-none" />
                            <Spin big />
                        </span>
                    </div>
                </div>
                <div className="pt-[11px]">
                    <SectionTitle>文本边框</SectionTitle>
                    <div className="pt-[5px]">
                        <Radio name="line" text="无线条" k="N" checked />
                        <Radio name="line" text="实线" k="S" />
                        <Radio name="line" text="渐变线" k="G" />
                    </div>
                </div>
            </div>
        </aside>
    );
}

function StatusBar() {
    return (
        <footer className="flex h-[16px] shrink-0 items-start whitespace-nowrap border-t border-[#c6c6c6] bg-[#f1f1f1] pl-[7px] pr-[26px] leading-[15px] text-[#444]">
            <div className="flex items-start gap-[21px]">
                <span>第 2 页，共 3 页</span>
                <span>20/848 个字</span>
                <span>修订: 关闭</span>
                <span>插入</span>
                <button aria-label="宏" className="pt-[2px]">
                    <svg width="14" height="13" viewBox="0 0 14 13" fill="none" stroke={gray}><path d="M7 2.500h6M1.500 6v7M12.500 2v11M3 6.500h8M3 9h8M3 11.500h8" strokeDasharray="2 1" /><path d="M6 1h7v3H6z" fill={gray} stroke="none" /><circle cx="3" cy="3" r="3" fill={gray} stroke="none" /></svg>
                </button>
            </div>
            <div className="ml-auto flex h-full items-start">
                <button aria-label="阅读视图" className="mr-[12px] pt-[2px]"><svg width="14" height="12" viewBox="0 0 14 12" fill="none" stroke={gray}><path d="M.5 1.500h5L7 2.500l1.500-1h5v9h-5L7 11.500l-1.500-1h-5zM7 2v10M2 4h3M2 6h3M2 8h3M9 4h3M9 6h3M9 8h3" /></svg></button>
                <button aria-label="页面视图" className="flex h-full w-[38px] justify-center bg-[#c8c8c8] pt-[2px]"><svg width="14" height="13" viewBox="0 0 14 13" fill="none" stroke="#555"><path d="M.5.5h13V13H.5zM2 3h10M2 5.500h10M2 8h10M2 10.500h10" /></svg></button>
                <button aria-label="Web 版式视图" className="mx-[12px] pt-[2px]"><svg width="14" height="13" viewBox="0 0 14 13" fill="none" stroke={gray}><path d="M5 12.500H.5V.5h11V4M2 3h8M2 5.500h5M2 8h3" /><circle cx="10" cy="9" r="3.500" fill={gray} /><path d="M8 8l3 1-1 3" stroke="#eee" /></svg></button>
                <button aria-label="缩小" className="ml-[5px] pt-[8px]"><svg width="6" height="2" viewBox="0 0 6 2"><path d="M0 0h6v2H0z" fill="#555" /></svg></button>
                <input
                    type="range"
                    aria-label="显示比例"
                    min={10}
                    max={190}
                    defaultValue={90}
                    className="mx-[4px] mt-[4px] h-[11px] w-[100px] appearance-none bg-[linear-gradient(#999,#999)] bg-[length:100%_1px] bg-center bg-no-repeat [&::-webkit-slider-thumb]:h-[11px] [&::-webkit-slider-thumb]:w-[4px] [&::-webkit-slider-thumb]:appearance-none [&::-webkit-slider-thumb]:bg-[#555]"
                />
                <button aria-label="放大" className="mr-[16px] pt-[5px]"><svg width="8" height="8" viewBox="0 0 8 8"><path d="M3 0h2v3h3v2H5v3H3V5H0V3h3z" fill="#555" /></svg></button>
                <span>90%</span>
            </div>
        </footer>
    );
}

function Watermark() {
    return (
        <div className="pointer-events-none absolute bottom-[7px] right-[11px] flex items-end gap-px font-bold">
            <svg width="43" height="42" viewBox="0 0 46 42" preserveAspectRatio="none">
                <defs>
                    <linearGradient id="wave" x1="0" y1="0" x2="1" y2="1"><stop offset="0" stopColor="#52b5ea" /><stop offset="1" stopColor="#3a7cc4" /></linearGradient>
                    <linearGradient id="leaf" x1="0" y1="1" x2="1" y2="0"><stop offset="0" stopColor="#d9e04a" /><stop offset="1" stopColor="#52b56b" /></linearGradient>
                </defs>
                <path d="M44 2C20 2 1 14 1 26c0 4 2 7 5 8-3-10 8-22 38-32z" fill="url(#wave)" />
                <path d="M37 14c6 2 7 9 2 15C33 37 18 42 5 39c14 0 25-6 28-14 1-5-1-9 4-11z" fill="url(#leaf)" />
                <path d="M36 14c-14-3-28 5-22 13 4 4 12 1 11-3-6 3-9-2-4-5 4-3 10-4 15-5z" fill="url(#wave)" />
                <path d="M7 34c8 3 20 0 25-9-1 8-12 15-25 9z" fill="#5bb3a5" />
            </svg>
            <div className="leading-[21px]">
                <div className="text-[21px] text-[#5d9bd3]">极光下载站</div>
                <div className="font-['Liberation_Sans',sans-serif] text-[17px] font-normal text-[#62bf78] [-webkit-text-stroke:1px_#62bf78]">www.xz7.com</div>
            </div>
        </div>
    );
}

export default function App() {
    return (
        <div className="relative flex h-screen min-w-[1313px] flex-col overflow-hidden bg-[#e6e6e6] font-['Noto_Sans','Noto_Sans_CJK_SC',sans-serif] text-[12px] leading-[16px]">
            <Header />
            <Ribbon />
            <QuickAccess />
            <main className="flex min-h-0 flex-1">
                <Editor />
                <FormatPane />
            </main>
            <StatusBar />
            <Watermark />
        </div>
    );
}
